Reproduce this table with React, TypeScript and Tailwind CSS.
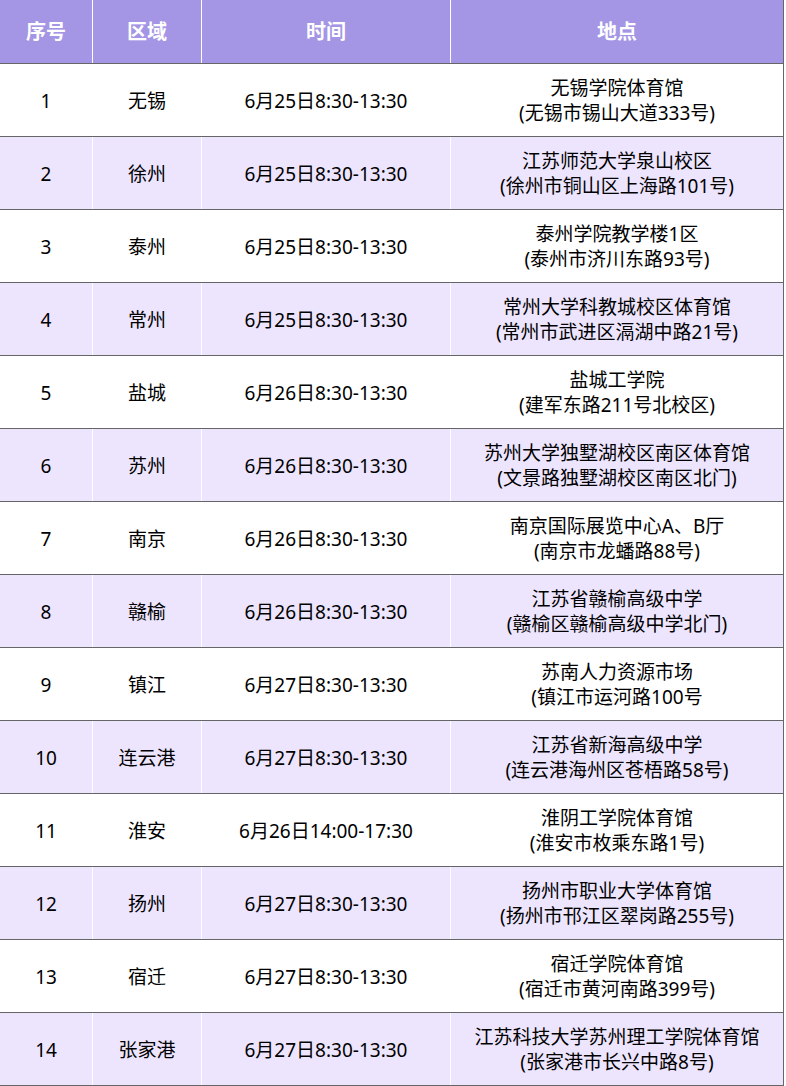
const rows: [string, string, string, string][] = [
  ['无锡', '6月25日8:30-13:30', '无锡学院体育馆', '(无锡市锡山大道333号)'],
  ['徐州', '6月25日8:30-13:30', '江苏师范大学泉山校区', '(徐州市铜山区上海路101号)'],
  ['泰州', '6月25日8:30-13:30', '泰州学院教学楼1区', '(泰州市济川东路93号)'],
  ['常州', '6月25日8:30-13:30', '常州大学科教城校区体育馆', '(常州市武进区滆湖中路21号)'],
  ['盐城', '6月26日8:30-13:30', '盐城工学院', '(建军东路211号北校区)'],
  ['苏州', '6月26日8:30-13:30', '苏州大学独墅湖校区南区体育馆', '(文景路独墅湖校区南区北门)'],
  ['南京', '6月26日8:30-13:30', '南京国际展览中心A、B厅', '(南京市龙蟠路88号)'],
  ['赣榆', '6月26日8:30-13:30', '江苏省赣榆高级中学', '(赣榆区赣榆高级中学北门)'],
  ['镇江', '6月27日8:30-13:30', '苏南人力资源市场', '(镇江市运河路100号'],
  ['连云港', '6月27日8:30-13:30', '江苏省新海高级中学', '(连云港海州区苍梧路58号)'],
  ['淮安', '6月26日14:00-17:30', '淮阴工学院体育馆', '(淮安市枚乘东路1号)'],
  ['扬州', '6月27日8:30-13:30', '扬州市职业大学体育馆', '(扬州市邗江区翠岗路255号)'],
  ['宿迁', '6月27日8:30-13:30', '宿迁学院体育馆', '(宿迁市黄河南路399号)'],
  ['张家港', '6月27日8:30-13:30', '江苏科技大学苏州理工学院体育馆', '(张家港市长兴中路8号)'],
];

const cols = 'grid grid-cols-[93px_109px_249px_333px]';

export default function App() {
  return (
    <div
      className="w-[784px] bg-white text-[19px] text-black"
      style={{ fontFamily: '"Noto Sans", "Noto Sans CJK SC", sans-serif' }}
    >
      <div className={`${cols} h-[64px] bg-[#a496e5] border-b border-[#666] font-bold text-[20px] text-white`}>
        {['序号', '区域', '时间', '地点'].map((h, i) => (
          <div
            key={h}
            className={`flex items-center justify-center border-r ${i === 3 ? 'border-[#666]' : 'border-white'}`}
          >
            {h}
          </div>
        ))}
      </div>
      {rows.map(([area, time, place, addr], idx) => (
        <div
          key={idx}
          className={`${cols} h-[73px] border-b border-[#666] ${idx % 2 === 1 ? 'bg-[#ede5fe]' : 'bg-white'}`}
        >
          <div className="flex items-center justify-center pt-[2px] border-r border-white">{idx + 1}</div>
          <div className="flex items-center justify-center pt-[2px] border-r border-white">{area}</div>
          <div className="flex items-center justify-center pt-[2px] border-r border-white">{time}</div>
          <div className="flex flex-col items-center justify-center pt-[2px] border-r border-[#666] leading-[25px] text-center">
            <span>{place}</span>
            <span>{addr}</span>
          </div>
        </div>
      ))}
    </div>
  );
}
